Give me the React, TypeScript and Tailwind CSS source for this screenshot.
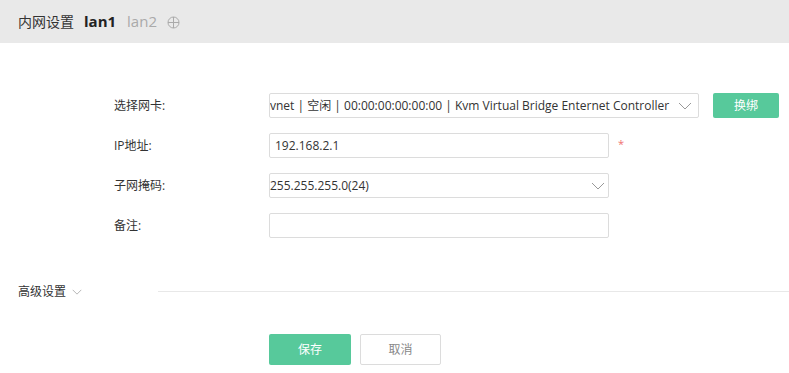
import React from 'react';

const font = { fontFamily: '"Open Sans", "Noto Sans CJK SC", sans-serif' };

const Chevron: React.FC<{ className?: string }> = ({ className }) => (
  <svg className={className} width="14" height="8" viewBox="0 0 14 8" fill="none">
    <path d="M1 1l6 6 6-6" stroke="#999" strokeWidth="1" />
  </svg>
);

const Row: React.FC<{ label: string; children: React.ReactNode }> = ({ label, children }) => (
  <div className="flex items-center h-[25px] mb-[15px]">
    <div className="w-[269px] pl-[114px] shrink-0 text-[12px] text-[#333] whitespace-nowrap">{label}</div>
    {children}
  </div>
);

const App: React.FC = () => {
  return (
    <div className="w-[789px] h-[373px] bg-white overflow-hidden" style={font}>
      {/* tab header */}
      <div className="h-[43px] bg-[#e9e9e9] flex items-center pl-[18px] gap-[10px]">
        <span className="text-[14px] text-[#333]">内网设置</span>
        <span className="text-[15px] font-bold text-[#222]">lan1</span>
        <span className="text-[15px] text-[#aaa] ml-[1px]">lan2</span>
        <svg width="13" height="13" viewBox="0 0 13 13" fill="none" className="mt-[2px]">
          <circle cx="6.5" cy="6.5" r="5.5" stroke="#aaa" />
          <path d="M1 6.5h11M6.5 1v11" stroke="#aaa" />
        </svg>
      </div>

      <div className="pt-[50px]">
        <Row label="选择网卡:">
          <div className="relative w-[430px] h-[25px] border border-[#dcdcdc] rounded-[2px] flex items-center overflow-hidden">
            <span className="text-[12px] text-[#333] whitespace-nowrap">
              vnet | 空闲 | 00:00:00:00:00:00 | Kvm Virtual Bridge Enternet Controller
            </span>
            <Chevron className="absolute right-[6px] top-[8px]" />
          </div>
          <button className="ml-[14px] w-[66px] h-[25px] bg-[#57c99b] rounded-[2px] text-white text-[12px]">换绑</button>
        </Row>
        <Row label="IP地址:">
          <div className="w-[340px] h-[25px] border border-[#dcdcdc] rounded-[2px] flex items-center pl-[5px] text-[12px] text-[#333]">
            192.168.2.1
          </div>
          <span className="ml-[9px] text-[#f07070] text-[11px] mb-[2px]">*</span>
        </Row>
        <Row label="子网掩码:">
          <div className="relative w-[340px] h-[25px] border border-[#dcdcdc] rounded-[2px] flex items-center text-[12px] text-[#333]">
            255.255.255.0(24)
            <Chevron className="absolute right-[3px] top-[8px]" />
          </div>
        </Row>
        <Row label="备注:">
          <div className="w-[340px] h-[25px] border border-[#dcdcdc] rounded-[2px]" />
        </Row>
      </div>

      <div className="mt-[44px] flex items-center h-[20px]">
        <div className="w-[158px] shrink-0 pl-[18px] flex items-center gap-[6px] text-[12px] text-[#333]">
          高级设置
          <Chevron className="w-[10px] h-[6px]" />
        </div>
        <div className="flex-1 h-px bg-[#e8e8e8] -mt-[1px]" />
      </div>

      <div className="mt-[32px] pl-[269px] flex gap-[9px]">
        <button className="w-[82px] h-[31px] bg-[#57c99b] rounded-[2px] text-white text-[12px]">保存</button>
        <button className="w-[81px] h-[31px] border border-[#dcdcdc] rounded-[2px] bg-white text-[#888] text-[12px]">取消</button>
      </div>
    </div>
  );
};

export default App;
